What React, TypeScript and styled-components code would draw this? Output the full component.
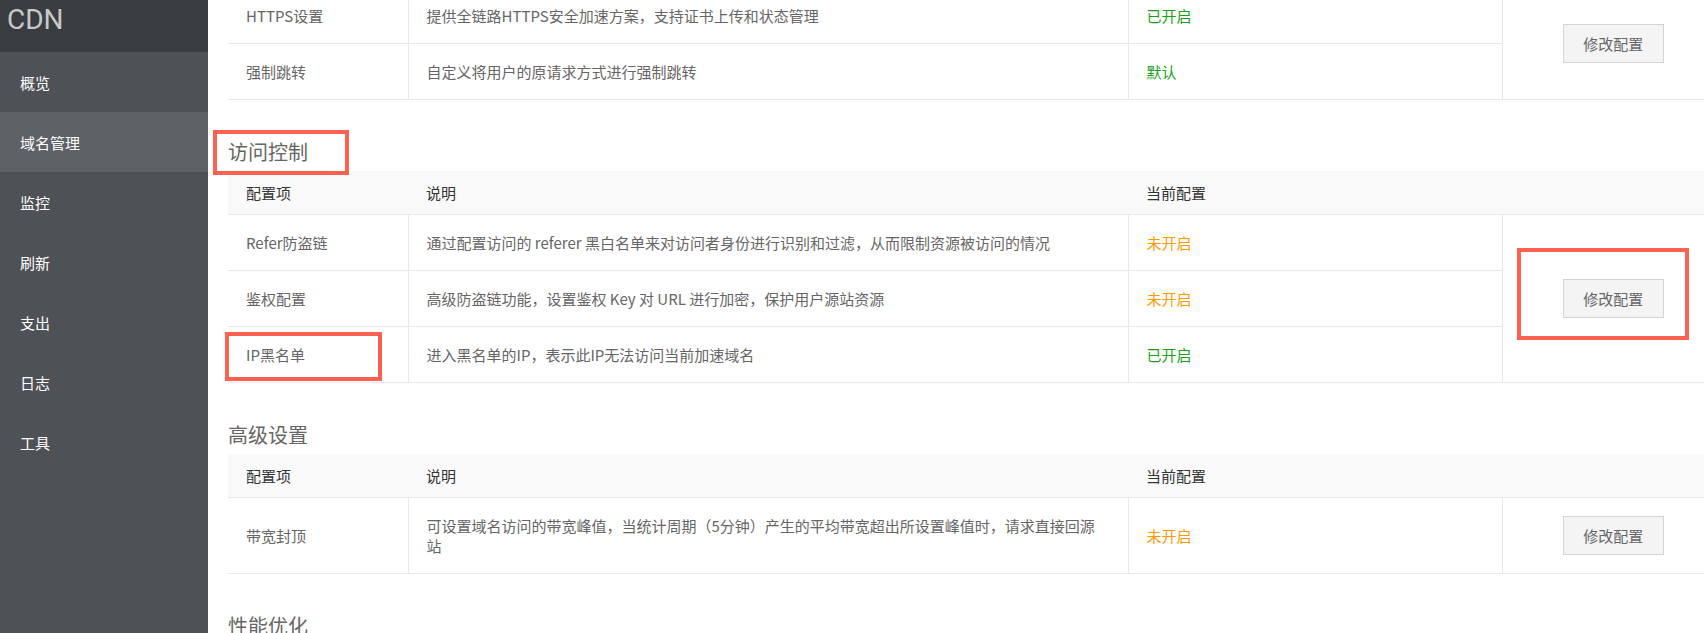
import React from 'react';
import styled, { createGlobalStyle } from 'styled-components';

const GlobalStyle = createGlobalStyle`
  html, body {
    margin: 0;
    padding: 0;
    height: 100%;
    overflow: hidden;
    background: #fff;
  }
  body {
    font-family: "Noto Sans CJK SC", "Noto Sans", sans-serif;
  }
`;

const Layout = styled.div`
  display: flex;
  height: 100vh;
`;

const Sidebar = styled.aside`
  width: 208px;
  flex-shrink: 0;
  background: #4e5156;
`;

const Brand = styled.div`
  height: 52px;
  padding-left: 7px;
  background: #393c40;
  color: #c8c8c8;
  font-family: Roboto, "Liberation Sans", sans-serif;
  font-size: 28px;
  line-height: 40px;
`;

const NavItem = styled.div<{ $active?: boolean }>`
  height: 60px;
  display: flex;
  align-items: center;
  padding-left: 20px;
  font-size: 15px;
  color: #fff;
  background: ${p => (p.$active ? '#5e6166' : 'transparent')};
`;

const Main = styled.main`
  flex: 1;
  overflow: hidden;
  padding-left: 20px;
`;

const Content = styled.div`
  width: 1496px;
  margin-top: -12px;
`;

const SectionTitle = styled.h3`
  margin: 40px 0 7px;
  height: 24px;
  font-size: 20px;
  line-height: 24px;
  font-weight: normal;
  color: #666;
`;

const Table = styled.table`
  width: 100%;
  border-collapse: collapse;
  table-layout: fixed;
  font-size: 15px;
`;

const HeadCell = styled.th`
  height: 43px;
  padding: 0 18px;
  background: #f9f9f9;
  color: #333;
  font-weight: normal;
  text-align: left;
  line-height: 20px;
  border-bottom: 1px solid #e8e8e8;
`;

const Cell = styled.td`
  padding: 17.5px 24px 17.5px 18px;
  line-height: 20px;
  color: #666;
  border-bottom: 1px solid #e8e8e8;
  & + & {
    border-left: 1px solid #e8e8e8;
  }
`;

const ActionCell = styled.td`
  text-align: center;
  vertical-align: middle;
  line-height: 20px;
  border-left: 1px solid #e8e8e8;
  border-bottom: 1px solid #e8e8e8;
`;

const Status = styled.span<{ $on: boolean }>`
  color: ${p => (p.$on ? '#1a9f1a' : '#ff9900')};
`;

const EditButton = styled.button`
  display: block;
  width: 101px;
  height: 39px;
  padding: 0;
  background: #f4f4f4;
  border: 1px solid #d4d4d4;
  border-radius: 0;
  color: #666;
  font-family: inherit;
  font-size: 15px;
  cursor: pointer;
`;

const Plain = styled.span`
  display: inline-block;
  vertical-align: top;
`;

// red annotation frame drawn over the marked element
const Mark = styled(Plain)<{ $t: number; $r: number; $b: number; $l: number }>`
  position: relative;
  &::after {
    content: '';
    position: absolute;
    top: ${p => -p.$t}px;
    right: ${p => -p.$r}px;
    bottom: ${p => -p.$b}px;
    left: ${p => -p.$l}px;
    border: 4px solid #ff6150;
    pointer-events: none;
  }
`;

type Row = { name: string; desc: string; on: boolean; status: string; markName?: boolean };
type Section = { title?: string; markTitle?: boolean; markButton?: boolean; head: boolean; rows: Row[] };

const sections: Section[] = [
  {
    head: false,
    rows: [
      { name: 'HTTPS设置', desc: '提供全链路HTTPS安全加速方案，支持证书上传和状态管理', on: true, status: '已开启' },
      { name: '强制跳转', desc: '自定义将用户的原请求方式进行强制跳转', on: true, status: '默认' },
    ],
  },
  {
    title: '访问控制',
    markTitle: true,
    markButton: true,
    head: true,
    rows: [
      { name: 'Refer防盗链', desc: '通过配置访问的 referer 黑白名单来对访问者身份进行识别和过滤，从而限制资源被访问的情况', on: false, status: '未开启' },
      { name: '鉴权配置', desc: '高级防盗链功能，设置鉴权 Key 对 URL 进行加密，保护用户源站资源', on: false, status: '未开启' },
      { name: 'IP黑名单', desc: '进入黑名单的IP，表示此IP无法访问当前加速域名', on: true, status: '已开启', markName: true },
    ],
  },
  {
    title: '高级设置',
    head: true,
    rows: [
      { name: '带宽封顶', desc: '可设置域名访问的带宽峰值，当统计周期（5分钟）产生的平均带宽超出所设置峰值时，请求直接回源站', on: false, status: '未开启' },
    ],
  },
  {
    title: '性能优化',
    head: false,
    rows: [],
  },
];

const navItems = ['概览', '域名管理', '监控', '刷新', '支出', '日志', '工具'];

function ConfigTable({ section }: { section: Section }) {
  const button = <EditButton>修改配置</EditButton>;
  return (
    <Table>
      <colgroup>
        <col style={{ width: 180 }} />
        <col style={{ width: 720 }} />
        <col style={{ width: 374 }} />
        <col style={{ width: 222 }} />
      </colgroup>
      {section.head && (
        <thead>
          <tr>
            <HeadCell>配置项</HeadCell>
            <HeadCell>说明</HeadCell>
            <HeadCell>当前配置</HeadCell>
            <HeadCell />
          </tr>
        </thead>
      )}
      <tbody>
        {section.rows.map((row, i) => (
          <tr key={row.name}>
            <Cell>
              {row.markName ? (
                <Mark $t={13} $r={77} $b={16} $l={21}>{row.name}</Mark>
              ) : (
                row.name
              )}
            </Cell>
            <Cell>{row.desc}</Cell>
            <Cell>
              <Status $on={row.on}>{row.status}</Status>
            </Cell>
            {i === 0 && (
              <ActionCell rowSpan={section.rows.length}>
                {section.markButton ? (
                  <Mark $t={31} $r={25} $b={22} $l={46}>{button}</Mark>
                ) : (
                  <Plain>{button}</Plain>
                )}
              </ActionCell>
            )}
          </tr>
        ))}
      </tbody>
    </Table>
  );
}

export default function App() {
  return (
    <>
      <GlobalStyle />
      <Layout>
        <Sidebar>
          <Brand>CDN</Brand>
          {navItems.map(item => (
            <NavItem key={item} $active={item === '域名管理'}>
              {item}
            </NavItem>
          ))}
        </Sidebar>
        <Main>
          <Content>
            {sections.map((section, i) => (
              <div key={i}>
                {section.title && (
                  <SectionTitle>
                    {section.markTitle ? (
                      <Mark $t={10} $r={41} $b={11} $l={15}>{section.title}</Mark>
                    ) : (
                      <Plain>{section.title}</Plain>
                    )}
                  </SectionTitle>
                )}
                {(section.head || section.rows.length > 0) && <ConfigTable section={section} />}
              </div>
            ))}
          </Content>
        </Main>
      </Layout>
    </>
  );
}
